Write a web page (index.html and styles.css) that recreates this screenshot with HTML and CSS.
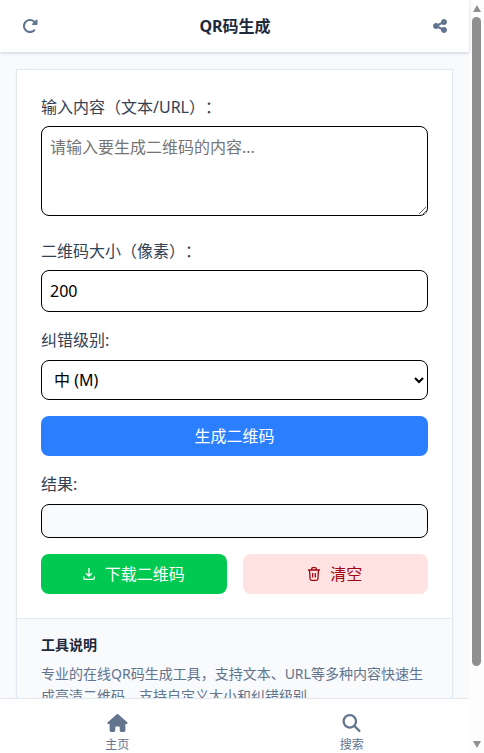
FILE: index.html
```html
<!DOCTYPE html>
<html lang="zh-CN">
<head>
<meta charset="utf-8">
<title>QR码生成</title>
<link rel="stylesheet" href="styles.css">
</head>
<body>
<div class="app">
  <header class="topbar">
    <svg class="top-icon" viewBox="0 0 512 512"><path d="M463.500 224H472c13.300 0 24-10.700 24-24V72c0-9.700-5.800-18.500-14.800-22.200s-19.300-1.700-26.200 5.200L413.400 96.600c-87.600-86.500-228.700-86.200-315.800 1c-87.500 87.500-87.500 229.300 0 316.800s229.300 87.500 316.800 0c12.500-12.500 12.500-32.800 0-45.300s-32.800-12.500-45.300 0c-62.500 62.500-163.800 62.500-226.300 0s-62.500-163.800 0-226.300c62.200-62.200 162.700-62.500 225.300-1L327 183c-6.900 6.900-8.900 17.200-5.200 26.200s12.500 14.800 22.200 14.800H463.500z"/></svg>
    <h1 class="title">QR码生成</h1>
    <svg class="top-icon" viewBox="0 0 448 512"><path d="M352 224c53 0 96-43 96-96s-43-96-96-96s-96 43-96 96c0 4 .2 8 .7 11.900l-94.100 47C145.400 170.200 121.900 160 96 160c-53 0-96 43-96 96s43 96 96 96c25.900 0 49.400-10.200 66.600-26.900l94.100 47c-.5 3.900-.7 7.800-.7 11.900c0 53 43 96 96 96s96-43 96-96s-43-96-96-96c-25.900 0-49.400 10.200-66.600 26.900l-94.100-47c.5-3.900 .7-7.800 .7-11.900s-.2-8-.7-11.900l94.100-47C302.600 213.800 326.100 224 352 224z"/></svg>
  </header>
  <main class="page">
    <section class="card">
      <div class="form">
        <div class="field gap-area">
          <label class="label" for="content">输入内容（文本/URL）<span class="tc">：</span></label>
          <textarea class="control area" id="content" placeholder="请输入要生成二维码的内容..."></textarea>
        </div>
        <div class="field">
          <label class="label" for="size">二维码大小（像素）<span class="tc">：</span></label>
          <input class="control size" id="size" type="number" value="200">
        </div>
        <div class="field">
          <label class="label" for="level">纠错级别:</label>
          <select class="control level" id="level"><option>中 (M)</option></select>
        </div>
        <button class="btn primary" type="button">生成二维码</button>
        <div class="field result-field">
          <div class="label">结果:</div>
          <div class="control result"></div>
        </div>
        <div class="actions">
          <button class="btn success" type="button">
            <svg class="btn-icon" viewBox="0 0 12 14"><path d="M6 1v8M3 6.200l3 3 3-3M.7 9.500v1.200c0 1 .6 1.600 1.600 1.600h7.400c1 0 1.600-.6 1.600-1.600V9.500"/></svg>
            下载二维码
          </button>
          <button class="btn danger" type="button">
            <svg class="btn-icon" viewBox="0 0 12 14"><path d="M0 3h12M3.700 3V1.700c0-.6.3-1 1-1h2.600c.7 0 1 .4 1 1V3M1.500 3l.6 8.800c0 .9.500 1.500 1.400 1.500h5c.9 0 1.400-.6 1.400-1.500l.6-8.800M4.700 6v4.500M7.300 6v4.500"/></svg>
            清空
          </button>
        </div>
      </div>
      <div class="about">
        <h2 class="about-title">工具说明</h2>
        <p class="about-text">专业的在线QR码生成工具，支持文本、URL等多种内容快速生成高清二维码，支持自定义大小和纠错级别。</p>
      </div>
    </section>
  </main>
  <nav class="tabbar">
    <a class="tab">
      <svg class="tab-icon" viewBox="0 0 576 512"><path d="M575.800 255.500c0 18-15 32.100-32 32.100h-32l.7 160.200c0 2.700-.2 5.400-.5 8.100V472c0 22.100-17.900 40-40 40H456c-1.100 0-2.200 0-3.300-.1c-1.400 .1-2.800 .1-4.200 .1H416 392c-22.100 0-40-17.900-40-40V448 384c0-17.700-14.300-32-32-32H256c-17.700 0-32 14.300-32 32v64 24c0 22.100-17.900 40-40 40H160 128.100c-1.500 0-3-.1-4.500-.2c-1.200 .1-2.400 .2-3.600 .2H104c-22.100 0-40-17.900-40-40V360c0-.9 0-1.900 .1-2.800V287.600H32c-18 0-32-14-32-32.100c0-9 3-17 10-24L266.400 8c7-7 15-8 22-8s15 2 21 7L564.800 231.500c8 7 12 15 11 24z"/></svg>
      <span>主页</span>
    </a>
    <a class="tab">
      <svg class="tab-icon" viewBox="0 0 512 512"><path d="M416 208c0 45.900-14.900 88.300-40 122.700L502.600 457.400c12.500 12.500 12.500 32.800 0 45.300s-32.800 12.500-45.300 0L330.700 376c-34.400 25.200-76.800 40-122.700 40C93.100 416 0 322.900 0 208S93.100 0 208 0S416 93.100 416 208zM208 352a144 144 0 1 0 0-288 144 144 0 1 0 0 288z"/></svg>
      <span>搜索</span>
    </a>
  </nav>
</div>
<aside class="scrollbar">
  <div class="arrow up"></div>
  <div class="track"><div class="thumb"></div></div>
  <div class="arrow down"></div>
</aside>
</body>
</html>
```
FILE: styles.css
```css
* { box-sizing: border-box; }
html, body { height: 100%; }
body {
  display: flex;
  margin: 0;
  overflow: hidden;
  background: #f8fafc;
  color: #334155;
  font-family: "Noto Sans", "Noto Sans CJK SC", sans-serif;
  font-size: 16px;
  line-height: 24px;
  text-spacing-trim: space-all;
}
.app { display: flex; flex-direction: column; flex: 1; min-width: 0; height: 100%; }
.topbar {
  position: relative;
  z-index: 1;
  display: flex;
  flex: none;
  align-items: center;
  justify-content: space-between;
  height: 52px;
  padding: 0 21px 0 22px;
  background: #fff;
  box-shadow: 0 1px 3px rgba(100, 116, 139, .3);
}
.top-icon { height: 16px; width: 16px; fill: #62748e; }
.title { margin: 0; font-size: 16px; font-weight: 700; color: #1e293b; }
.page { flex: 1; min-height: 0; overflow: hidden; padding: 17px 16px 0; }
.card {
  background: #fff;
  border: 1px solid #e2e8f0;
  box-shadow: 0 1px 2px rgba(100, 116, 139, .1);
}
.form { display: flex; flex-direction: column; padding: 24px; }
.field { display: flex; flex-direction: column; margin-bottom: 16px; }
.gap-area { margin-bottom: 22px; }
.label { display: block; margin-bottom: 8px; height: 24px; color: #334155; }
.tc { font-family: "Noto Sans CJK TC", sans-serif; }
.control {
  display: block;
  width: 100%;
  border: 1px solid #000;
  border-radius: 8px;
  background: #fff;
  color: #000;
  font: inherit;
}
.area { height: 90px; padding: 8px; resize: vertical; }
.area::placeholder { color: #757575; }
.size { height: 42px; padding: 8px; appearance: textfield; }
.level { height: 40px; padding: 0 8px; }
.result { height: 34px; background: #f8fafc; }
.result-field { margin: 16px 0; }
.btn {
  display: flex;
  align-items: center;
  justify-content: center;
  gap: 10px;
  height: 40px;
  border: 0;
  border-radius: 8px;
  font: inherit;
}
.primary { background: #2b7fff; color: #fff; }
.actions { display: grid; grid-template-columns: 1fr 1fr; gap: 16px; }
.success { background: #00c951; color: #fff; }
.danger { background: #ffe2e2; color: #9f0712; }
.btn-icon { flex: none; width: 12px; height: 14px; fill: none; stroke: currentColor; stroke-width: 1.300; }
.about { padding: 16px 24px 24px; background: #f8fafc; border-top: 1px solid #e2e8f0; }
.about-title { margin: 0 0 8px; font-size: 14px; line-height: 20px; font-weight: 700; color: #1e293b; }
.about-text { margin: 0; font-size: 14px; line-height: 22.4px; color: #62748e; }
.tabbar {
  display: grid;
  flex: none;
  grid-template-columns: 1fr 1fr;
  height: 55px;
  background: #fff;
  border-top: 1px solid #e2e8f0;
}
.tab { display: flex; flex-direction: column; align-items: center; padding-top: 15px; font-size: 12px; line-height: 16px; color: #62748e; }
.tab-icon { height: 18px; width: 21px; fill: #62748e; margin-bottom: 5px; }
.scrollbar {
  display: flex;
  flex: none;
  flex-direction: column;
  align-items: center;
  width: 15px;
  height: 100%;
  background: #fdfdfd;
  padding: 5px 0;
}
.arrow { flex: none; width: 0; height: 0; border-left: 4.500px solid transparent; border-right: 4.500px solid transparent; }
.up { border-bottom: 7px solid #8f8f8f; }
.down { border-top: 7px solid #8f8f8f; }
.track { flex: 1; min-height: 0; width: 9px; padding-top: 5px; }
.thumb { width: 9px; height: 649px; border-radius: 5px; background: #8f8f8f; }
```
